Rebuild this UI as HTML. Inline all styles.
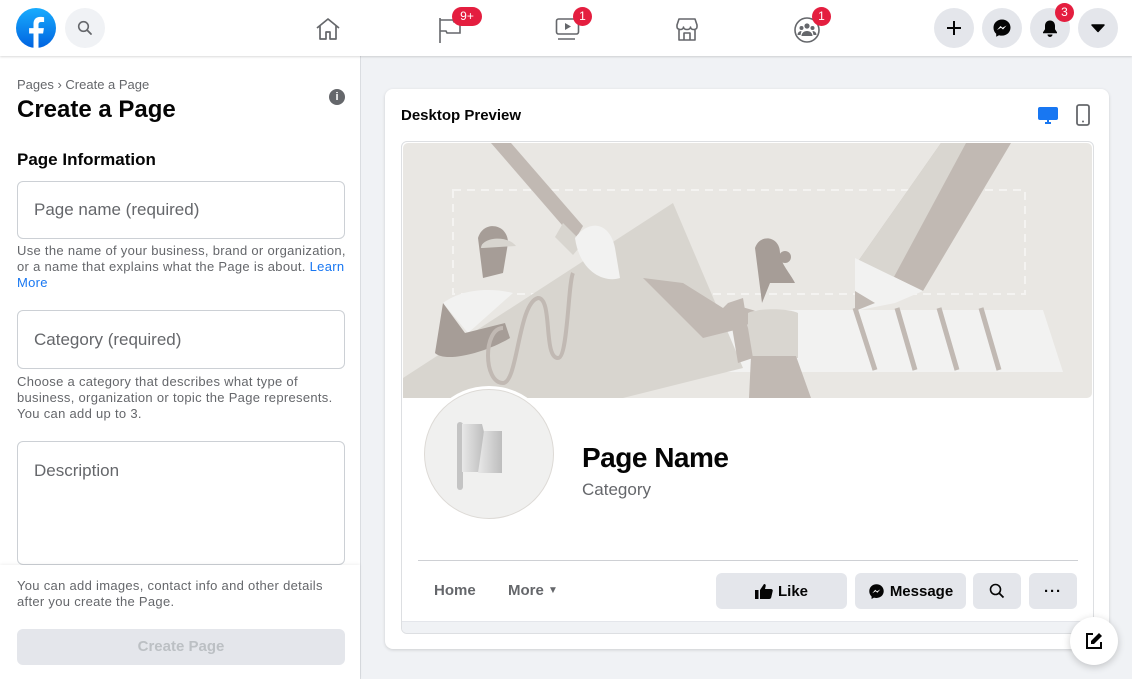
<!DOCTYPE html>
<html><head><meta charset="utf-8">
<style>
*{box-sizing:border-box;margin:0;padding:0}
body{width:1132px;height:679px;overflow:hidden;background:#f0f2f5;font-family:"Liberation Sans",Helvetica,Arial,sans-serif;position:relative;color:#050505}
.abs{position:absolute}
.hdr{left:0;top:0;width:1132px;height:56px;background:#fff;box-shadow:0 1px 2px rgba(0,0,0,.15);z-index:5}
.circ{position:absolute;border-radius:50%;background:#e4e6eb;width:40px;height:40px;display:flex;align-items:center;justify-content:center}
.badge{position:absolute;background:#e41e3f;color:#fff;font-size:12px;height:19px;min-width:19px;border-radius:10px;text-align:center;line-height:19px;padding:0 4px}
.left{left:0;top:56px;width:361px;height:623px;background:#fff;border-right:1px solid #dadde1}
.inp{position:absolute;left:17px;width:328px;border:1px solid #ccd0d5;border-radius:6px;font-size:17px;color:#65676b;padding-left:16px}
.help{position:absolute;left:17px;width:340px;font-size:13px;letter-spacing:.3px;color:#65676b;line-height:16px;white-space:nowrap}
.btn{position:absolute;top:573px;height:36px;background:#e4e6eb;border-radius:6px;display:flex;align-items:center;justify-content:center;font-size:15px;font-weight:bold;color:#050505}
</style></head><body>
<div class="abs hdr">
  <svg class="abs" style="left:16px;top:8px" width="40" height="40" viewBox="0 0 40 40"><defs><linearGradient id="g" x1="0" y1="0" x2="0" y2="1"><stop offset="0" stop-color="#18acfe"/><stop offset="1" stop-color="#0163e0"/></linearGradient></defs><circle cx="20" cy="20" r="20" fill="url(#g)"/><path d="M22.5 40V25.5h4.6l.8-5.4h-5.4v-3.4c0-1.6.6-2.7 2.9-2.7h2.7V9.2c-.5-.1-2.2-.3-4-.3-3.9 0-6.6 2.4-6.6 6.8v4.4h-4.4v5.4h4.4V40z" fill="#fff"/></svg>
  <div class="circ" style="left:65px;top:8px;background:#f0f2f5"><svg width="16" height="16" viewBox="0 0 16 16"><circle cx="6.5" cy="6.5" r="4.8" fill="none" stroke="#65676b" stroke-width="1.6"/><path d="M10 10l4 4" stroke="#65676b" stroke-width="1.8" stroke-linecap="round"/></svg></div>
  <svg class="abs" style="left:315px;top:17px" width="26" height="24" viewBox="0 0 26 24"><path d="M2 11L13 2l11 9M5 9v13h6v-7h4v7h6V9" fill="none" stroke="#65676b" stroke-width="1.7" stroke-linejoin="round"/></svg>
  <svg class="abs" style="left:437px;top:16px" width="26" height="28" viewBox="0 0 26 28"><path d="M3 2v25M3 4h13l1 2h6v11H10l-1-2H3" fill="none" stroke="#65676b" stroke-width="1.6"/></svg>
  <div class="badge" style="left:452px;top:7px;width:30px">9+</div>
  <svg class="abs" style="left:555px;top:17px" width="26" height="24" viewBox="0 0 26 24"><rect x="1.5" y="2" width="22" height="15" rx="2" fill="none" stroke="#65676b" stroke-width="1.6"/><path d="M10 6v7l6-3.5z" fill="#65676b"/><path d="M3 22h17" stroke="#65676b" stroke-width="1.6"/></svg>
  <div class="badge" style="left:573px;top:7px">1</div>
  <svg class="abs" style="left:674px;top:16px" width="26" height="26" viewBox="0 0 26 26"><path d="M3 9l2-6h16l2 6v2c0 1.5-1.5 2.5-3.3 2.5S16.5 12.5 16.5 11c0 1.5-1.5 2.5-3.5 2.5S9.5 12.5 9.5 11c0 1.5-1.5 2.5-3.2 2.5S3 12.5 3 11zM5 13.5V24h16V13.5M10 24v-7h6v7" fill="none" stroke="#65676b" stroke-width="1.6" stroke-linejoin="round"/></svg>
  <svg class="abs" style="left:793px;top:16px" width="28" height="28" viewBox="0 0 28 28"><circle cx="14" cy="14" r="12" fill="none" stroke="#65676b" stroke-width="1.6"/><circle cx="14" cy="10" r="2.6" fill="#65676b"/><circle cx="8.5" cy="12" r="2" fill="#65676b"/><circle cx="19.5" cy="12" r="2" fill="#65676b"/><path d="M8.5 20c0-3 2.5-5 5.5-5s5.5 2 5.5 5zM4.5 19c0-2 1.5-4 4-4l-1 4zM23.5 19c0-2-1.5-4-4-4l1 4z" fill="#65676b"/></svg>
  <div class="badge" style="left:812px;top:7px">1</div>
  <div class="circ" style="left:934px;top:8px"><svg width="18" height="18" viewBox="0 0 18 18"><path d="M9 2v14M2 9h14" stroke="#050505" stroke-width="2"/></svg></div>
  <div class="circ" style="left:982px;top:8px"><svg width="20" height="20" viewBox="0 0 20 20"><path d="M10 1.5C5.2 1.5 1.5 5 1.5 9.7c0 2.5 1 4.6 2.7 6.1v3l2.8-1.6c.9.3 1.9.4 3 .4 4.8 0 8.5-3.5 8.5-8S14.8 1.5 10 1.5z" fill="#050505"/><path d="M5 12l3.5-4 2 1.8L14.5 7.5 11 11.5 9 9.7z" fill="#fff"/></svg></div>
  <div class="circ" style="left:1030px;top:8px"><svg width="18" height="18" viewBox="0 0 18 18"><path d="M9 1.5c-3 0-5 2.3-5 5.3v3.5l-2 3v1h14v-1l-2-3V6.8c0-3-2-5.3-5-5.3zM6.5 15.5a2.5 2.5 0 005 0z" fill="#050505"/></svg></div>
  <div class="badge" style="left:1055px;top:3px">3</div>
  <div class="circ" style="left:1078px;top:8px"><svg width="14" height="10" viewBox="0 0 14 10"><path d="M1 2h12L7 8.5z" fill="#050505" stroke="#050505" stroke-linejoin="round" stroke-width="1.5"/></svg></div>
</div>

<div class="abs left">
  <div class="abs" style="left:17px;top:21px;font-size:13px;color:#65676b">Pages › Create a Page</div>
  <div class="abs" style="left:17px;top:40px;font-size:24px;font-weight:bold">Create a Page</div>
  <div class="abs" style="left:329px;top:33px;width:16px;height:16px;border-radius:50%;background:#65676b;color:#fff;font-size:11px;font-weight:bold;text-align:center;line-height:16px">i</div>
  <div class="abs" style="left:17px;top:94px;font-size:17px;font-weight:bold">Page Information</div>
  <div class="inp" style="top:125px;height:58px;line-height:56px">Page name (required)</div>
  <div class="help" style="top:187px">Use the name of your business, brand or organization,<br>or a name that explains what the Page is about. <span style="color:#1877f2">Learn</span><br><span style="color:#1877f2">More</span></div>
  <div class="inp" style="top:254px;height:59px;line-height:57px">Category (required)</div>
  <div class="help" style="top:318px">Choose a category that describes what type of<br>business, organization or topic the Page represents.<br>You can add up to 3.</div>
  <div class="inp" style="top:385px;height:124px;padding-top:19px">Description</div>
  <div class="abs" style="left:0;top:509px;width:360px;height:114px;background:#fff;box-shadow:0 -1px 3px rgba(0,0,0,.06)">
    <div class="help" style="top:13px">You can add images, contact info and other details<br>after you create the Page.</div>
    <div class="abs" style="left:17px;top:64px;width:328px;height:36px;background:#e4e6eb;border-radius:6px;color:#bcc0c4;font-size:15px;font-weight:bold;text-align:center;line-height:36px">Create Page</div>
  </div>
</div>

<div class="abs" style="left:385px;top:89px;width:724px;height:560px;background:#fff;border-radius:8px;box-shadow:0 1px 3px rgba(0,0,0,.15)"></div>
<div class="abs" style="left:401px;top:107px;font-size:15px;font-weight:bold">Desktop Preview</div>
<svg class="abs" style="left:1037px;top:106px" width="22" height="20" viewBox="0 0 22 20"><rect x="1" y="1" width="20" height="13" rx="2" fill="#1877f2"/><path d="M8 17h6M11 14v3" stroke="#1877f2" stroke-width="2"/></svg>
<svg class="abs" style="left:1075px;top:104px" width="16" height="22" viewBox="0 0 16 22"><rect x="2" y="1" width="12" height="20" rx="2" fill="none" stroke="#65676b" stroke-width="1.8"/><circle cx="8" cy="17.5" r="1" fill="#65676b"/></svg>
<div class="abs" style="left:401px;top:141px;width:693px;height:493px;border:1px solid #dddfe2;border-radius:6px;background:#fff;overflow:hidden">
  <div class="abs" style="left:0;bottom:0;width:100%;height:12px;background:#f0f2f5;border-top:1px solid #e4e6eb"></div>
  <svg class="abs" style="left:1px;top:1px" width="689" height="255" viewBox="0 0 689 255">
    <rect width="689" height="255" rx="5" fill="#e9e7e3"/>
    <rect x="50" y="47" width="572" height="104" fill="none" stroke="#f4f3f1" stroke-width="2" stroke-dasharray="8 6"/>
    <path d="M200 167h440l20 62H175z" fill="#f2f2f1"/>
    <path d="M0 235L270 60l70 165-120 30H0z" fill="#d8d5cf"/>
    <path d="M88 0h20l72 83-8 14z" fill="#c1b9b3"/>
    <path d="M160 80l20 20-10 12-18-18z" fill="#d8d5cf"/>
    <path d="M172 95c15-20 35-15 40 10l5 30c-15 5-40-5-45-40z" fill="#f2f2f1"/>
    <path d="M456 117L538 0h70L520 148z" fill="#c1b9b3"/>
    <path d="M456 117L538 0h25l-78 145z" fill="#d9d6d0"/>
    <path d="M452 115l68 33-28 12-40 8z" fill="#f2f2f1"/>
    <path d="M452 148l20 12-20 8z" fill="#c1b9b3"/>
    <path d="M452 165l20 62M494 165l18 62M536 165l18 62M578 165l18 62" stroke="#c1b9b3" stroke-width="5"/>
    <path d="M75 95c5-18 30-15 30 5l-5 30-20 5z" fill="#a69d97"/>
    <path d="M78 105c0-10 25-14 35-2l-33 2z" fill="#d8d5cf"/>
    <path d="M40 160c20-15 50-15 70-10l-45 40z" fill="#f2f2f1"/>
    <path d="M40 160l-8 50c10 10 50 0 75-15l-5-15-40 10z" fill="#a69d97"/>
    <path d="M100 185c-20 0-20 55 0 55c15 0 15-80 35-85c15 0 5 60 20 60c10 0 10-75 15-85" fill="none" stroke="#c1b9b3" stroke-width="4"/>
    <path d="M240 135l60 60 40-10 20-15-35-10-5 5-40-25z" fill="#c1b9b3"/>
    <path d="M352 105c5-15 25-12 25 5c0 10 10 20 15 30h-25l-8 20z" fill="#a69d97"/>
    <circle cx="382" cy="114" r="6" fill="#a69d97"/>
    <path d="M345 170c10-5 40-5 50 0v45h-50z" fill="#d9d6d0"/>
    <path d="M348 213h45l15 42h-62z" fill="#c1b9b3"/>
    <path d="M325 160l10 60 15-5-10-60z" fill="#c1b9b3"/>
  </svg>
  <div class="abs" style="left:19px;top:244px;width:136px;height:136px;border-radius:50%;background:#fff"></div>
  <div class="abs" style="left:22px;top:247px;width:130px;height:130px;border-radius:50%;background:#f0f0ef;border:1px solid #dddad6"></div>
  <svg class="abs" style="left:54px;top:280px" width="66" height="70" viewBox="0 0 66 70"><defs><linearGradient id="f" x1="0" x2="1"><stop offset="0" stop-color="#e8e8e8"/><stop offset="1" stop-color="#bdbdbd"/></linearGradient></defs><rect x="1" y="0" width="6" height="68" rx="3" fill="#c4c4c4"/><path d="M6 2h20l2 8-4 40H6z" fill="url(#f)"/><path d="M28 9h18v42H22z" fill="url(#f)"/></svg>
  <div class="abs" style="left:180px;top:300px;font-size:28px;font-weight:bold;letter-spacing:-.5px">Page Name</div>
  <div class="abs" style="left:180px;top:338px;font-size:17px;color:#65676b">Category</div>
  <div class="abs" style="left:16px;top:418px;width:660px;height:1px;background:#ced0d4"></div>
  <div class="abs" style="left:32px;top:440px;font-size:15px;font-weight:bold;color:#65676b">Home</div>
  <div class="abs" style="left:106px;top:440px;font-size:15px;font-weight:bold;color:#65676b">More <span style="font-size:10px;position:relative;top:-2px">▼</span></div>
</div>
<div class="btn" style="left:716px;width:131px"><svg width="18" height="16" viewBox="0 0 18 16" style="margin-right:5px"><path d="M0 7h3.5v9H0zM5 7l4-6c1.5 0 2 1 1.6 2.5L10 6h6c1.2 0 2 1 1.7 2l-1.5 6.5c-.3 1-1 1.5-2 1.5H5z" fill="#050505"/></svg>Like</div>
<div class="btn" style="left:855px;width:111px"><svg width="17" height="17" viewBox="0 0 20 20" style="margin-right:5px"><path d="M10 1.5C5.2 1.5 1.5 5 1.5 9.7c0 2.5 1 4.6 2.7 6.1v3l2.8-1.6c.9.3 1.9.4 3 .4 4.8 0 8.5-3.5 8.5-8S14.8 1.5 10 1.5z" fill="#050505"/><path d="M5 12l3.5-4 2 1.8L14.5 7.5 11 11.5 9 9.7z" fill="#fff"/></svg>Message</div>
<div class="btn" style="left:973px;width:48px"><svg width="16" height="16" viewBox="0 0 16 16"><circle cx="6.5" cy="6.5" r="5" fill="none" stroke="#050505" stroke-width="1.6"/><path d="M10 10l4.5 4.5" stroke="#050505" stroke-width="1.8"/></svg></div>
<div class="btn" style="left:1029px;width:48px;letter-spacing:1px">···</div>
<div class="abs" style="left:1070px;top:617px;width:48px;height:48px;border-radius:50%;background:#fff;box-shadow:0 2px 8px rgba(0,0,0,.2);display:flex;align-items:center;justify-content:center"><svg width="20" height="20" viewBox="0 0 20 20"><path d="M9 3H3v14h14v-6" fill="none" stroke="#050505" stroke-width="2"/><path d="M15 2l3 3-8 8H7v-3z" fill="#050505"/></svg></div>
</body></html>
